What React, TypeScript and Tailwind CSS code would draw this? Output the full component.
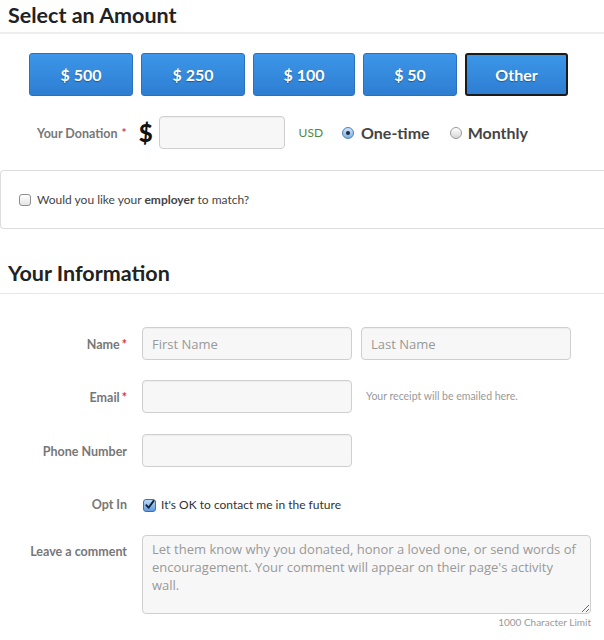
import React from 'react';

const AMOUNTS = [
  { label: '$ 500', w: 'w-[104px]' },
  { label: '$ 250', w: 'w-[104px]' },
  { label: '$ 100', w: 'w-[102px]' },
  { label: '$ 50', w: 'w-[94px]' },
];

const inputCls =
  'h-[33px] rounded-[4px] border border-[#cfcfcf] bg-[#f7f7f7] px-[9px] text-[13px] text-[#555] outline-none placeholder:text-[#999] shadow-[inset_0_1px_1px_rgba(0,0,0,0.04)]';

const labelBase = 'w-[127px] text-right text-[12.5px] font-bold text-[#777]';
const labelCls = `${labelBase} mt-[3px]`;

const Radio = ({ on }: { on?: boolean }) => (
  <span
    className={
      on
        ? 'flex h-[12px] w-[12px] items-center justify-center rounded-full border border-[#4a7fb8] bg-[linear-gradient(#cfe3f7,#7fb0e6)]'
        : 'flex h-[12px] w-[12px] items-center justify-center rounded-full border border-[#9a9a9a] bg-[linear-gradient(#ffffff,#d6d6d6)]'
    }
  >
    {on && <span className="h-[4px] w-[4px] rounded-full bg-[#1c2a3a]" />}
  </span>
);

const Req = () => <span className="ml-[2px] text-[#d9383a]">*</span>;

export default function App() {
  return (
    <div className="h-[640px] w-[604px] overflow-hidden bg-white font-['Lato','Liberation_Sans',sans-serif] text-[#333]">
      {/* Select an Amount */}
      <div className="h-[34px] border-b-2 border-[#eeeeee] pl-[8px] pt-[2px] text-[21.5px] font-bold leading-[26px] text-[#222]">
        Select an Amount
      </div>

      <div className="mt-[19px] flex gap-[8px] pl-[29px]">
        {AMOUNTS.map((a) => (
          <button
            key={a.label}
            className={`${a.w} h-[43px] rounded-[3px] border border-[#2a70bd] bg-[linear-gradient(#3c96e8,#2e7ed2)] text-[16px] font-bold text-white [text-shadow:0_1px_1px_rgba(0,0,0,0.35)]`}
          >
            {a.label}
          </button>
        ))}
        <button className="h-[43px] w-[103px] rounded-[3px] border-2 border-[#1b1b1b] bg-[linear-gradient(#3c96e8,#2e7ed2)] text-[16px] font-bold text-white [text-shadow:0_1px_1px_rgba(0,0,0,0.35)]">
          Other
        </button>
      </div>

      <div className="mt-[20px] flex h-[33px] items-center">
        <span className="ml-[37px] mt-[3px] text-[12.5px] font-bold text-[#777]">Your Donation</span>
        <span className="ml-[4px] text-[12px] font-bold text-[#d9383a]">*</span>
        <span className="ml-[12px] text-[24px] font-black leading-none text-[#111]">$</span>
        <input className={`${inputCls} ml-[6px] w-[126px]`} />
        <span className="ml-[14px] text-[12px] text-[#4f8a3c]">USD</span>
        <span className="ml-[19px]">
          <Radio on />
        </span>
        <span className="ml-[7px] text-[16px] font-bold text-[#444]">One-time</span>
        <span className="ml-[20px]">
          <Radio />
        </span>
        <span className="ml-[6px] text-[16px] font-bold text-[#444]">Monthly</span>
      </div>

      <div className="mt-[21px] flex h-[59px] items-center rounded-l-[4px] border-y border-l border-[#dddddd]">
        <span className="ml-[18px] h-[12px] w-[12px] rounded-[3px] border border-[#8e8e8e] bg-[linear-gradient(#ffffff,#e4e4e4)]" />
        <span className="ml-[6px] text-[12px] text-[#444]">
          Would you like your <b className="font-bold">employer</b> to match?
        </span>
      </div>

      {/* Your Information */}
      <div className="flex h-[65px] items-end border-b border-[#e6e6e6] pb-[7px] pl-[8px] text-[21.5px] font-bold leading-[26px] text-[#222]">
        Your Information
      </div>

      <div className="mt-[33px] flex flex-col">
        <div className="flex items-center">
          <span className={labelCls}>
            Name<Req />
          </span>
          <input placeholder="First Name" className={`${inputCls} ml-[15px] w-[210px] font-['Open_Sans',sans-serif]`} />
          <input placeholder="Last Name" className={`${inputCls} ml-[9px] w-[210px] font-['Open_Sans',sans-serif]`} />
        </div>

        <div className="mt-[20px] flex items-center">
          <span className={labelCls}>
            Email<Req />
          </span>
          <input className={`${inputCls} ml-[15px] w-[210px]`} />
          <span className="ml-[14px] text-[10.5px] text-[#999]">Your receipt will be emailed here.</span>
        </div>

        <div className="mt-[21px] flex items-center">
          <span className={labelCls}>Phone Number</span>
          <input className={`${inputCls} ml-[15px] w-[210px]`} />
        </div>

        <div className="mt-[29px] flex items-center">
          <span className={labelBase}>Opt In</span>
          <span className="ml-[16px] flex h-[13px] w-[13px] items-center justify-center rounded-[3px] border border-[#3d6fa8] bg-[linear-gradient(#bcd8f5,#5e9be0)]">
            <svg viewBox="0 0 12 12" className="h-[12px] w-[12px]">
              <path d="M2.5 6.2 L5 9 L10.5 1.5" fill="none" stroke="#102030" strokeWidth="2" strokeLinecap="round" strokeLinejoin="round" />
            </svg>
          </span>
          <span className="ml-[5px] text-[12px] text-[#333]">It's OK to contact me in the future</span>
        </div>

        <div className="mt-[20px] flex items-start">
          <span className={`${labelBase} mt-[8px]`}>Leave a comment</span>
          <div className="ml-[15px] flex w-[449px] flex-col">
            <textarea
              placeholder="Let them know why you donated, honor a loved one, or send words of encouragement. Your comment will appear on their page's activity wall."
              className="h-[79px] w-full resize-y rounded-[4px] border border-[#cfcfcf] bg-[#f7f7f7] px-[9px] py-[4px] font-['Open_Sans',sans-serif] text-[13px] leading-[18px] text-[#555] outline-none placeholder:text-[#999]"
            />
            <span className="mt-[1px] self-end text-[10px] text-[#999]">1000 Character Limit</span>
          </div>
        </div>
      </div>
    </div>
  );
}
